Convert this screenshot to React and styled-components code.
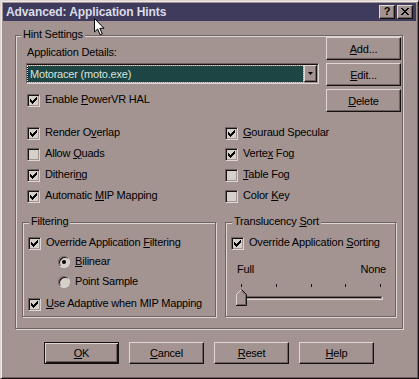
import React from 'react';
import styled, { createGlobalStyle, css } from 'styled-components';

const C = {
  bg: '#a39492',
  light: '#ddd6d3',
  hi: '#efe9e7',
  shadow: '#6f6361',
  dark: '#161010',
  title: '#3e3b5d',
  titleText: '#dcdce6',
  face: '#d5d0ca',
  teal: '#1d4543',
  tealText: '#d6e4df',
};

const Global = createGlobalStyle`
  html, body { margin: 0; padding: 0; background: ${C.bg}; }
  body { font-family: "Liberation Sans", Arial, sans-serif; font-size: 11px; color: #000; }
`;

const Window = styled.div`
  position: relative;
  box-sizing: border-box;
  width: 419px;
  height: 379px;
  background: ${C.bg};
  border: 1px solid;
  border-color: ${C.light} ${C.dark} ${C.dark} ${C.light};
  box-shadow: inset 1px 1px 0 ${C.hi}, inset -1px -1px 0 ${C.shadow};
  padding: 2px;
  display: flex;
  flex-direction: column;
  font-family: "Liberation Sans", Arial, sans-serif;
  font-size: 11px;
  letter-spacing: -0.2px;
  color: #000;
  overflow: hidden;
`;

const TitleBar = styled.div`
  flex: none;
  height: 18px;
  background: ${C.title};
  display: flex;
  align-items: center;
  justify-content: space-between;
  padding: 0 3px;
`;

const TitleText = styled.span`
  font-weight: bold;
  font-size: 12px;
  letter-spacing: -0.1px;
  line-height: 14px;
  color: ${C.titleText};
  white-space: nowrap;
`;

const CaptionButtons = styled.div`
  display: flex;
  gap: 2px;
`;

const raised = css`
  background: ${C.bg};
  border: 1px solid;
  border-color: ${C.light} ${C.dark} ${C.dark} ${C.light};
  box-shadow: inset -1px -1px 0 ${C.shadow};
`;

const sunken = css`
  border: 1px solid;
  border-color: ${C.shadow} ${C.light} ${C.light} ${C.shadow};
  box-shadow: inset 1px 1px 0 ${C.dark}, inset -1px -1px 0 ${C.bg};
`;

const CaptionButton = styled.div`
  box-sizing: border-box;
  width: 16px;
  height: 14px;
  ${raised}
  display: flex;
  align-items: center;
  justify-content: center;
  font-weight: bold;
  font-size: 11px;
  line-height: 11px;
  letter-spacing: 0;
  color: #000;
  padding-bottom: 1px;
`;

const Glyph = styled.svg`
  display: block;
  flex: none;
`;

const Body = styled.div`
  flex: 1;
  display: flex;
  flex-direction: column;
  padding: 14px 13px 0 12px;
`;

const Group = styled.div`
  position: relative;
  box-sizing: border-box;
  border: 1px solid ${C.shadow};
  box-shadow: inset 1px 1px 0 ${C.light}, 1px 1px 0 ${C.light};
`;

const Legend = styled.span`
  position: absolute;
  top: -8px;
  left: ${p => p.$left}px;
  padding: 0 2px;
  line-height: 13px;
  background: ${C.bg};
  white-space: nowrap;
`;

const MainGroup = styled(Group)`
  padding: 1px 1px 11px 6px;
  display: flex;
  flex-direction: column;
`;

const TopSection = styled.div`
  display: flex;
  gap: 7px;
  margin-left: 4px;
`;

const LeftCol = styled.div`
  flex: 1;
  display: flex;
  flex-direction: column;
`;

const FieldLabel = styled.div`
  margin: 9px 0 0 1px;
  line-height: 13px;
`;

const Combo = styled.div`
  box-sizing: border-box;
  margin-top: 4px;
  height: 21px;
  width: 293px;
  ${sunken}
  background: ${C.bg};
  padding: 1px;
  display: flex;
  gap: 1px;
`;

const ComboField = styled.div`
  flex: 1;
  height: 16px;
  margin-top: 1px;
  box-sizing: border-box;
  background: ${C.teal};
  outline: 1px dotted ${C.light};
  outline-offset: 0px;
  color: ${C.tealText};
  line-height: 16px;
  padding-left: 2px;
  white-space: nowrap;
`;

const DropButton = styled.div`
  box-sizing: border-box;
  width: 13px;
  ${raised}
  display: flex;
  align-items: center;
  justify-content: center;
`;

const SideButtons = styled.div`
  display: flex;
  flex-direction: column;
  gap: 3px;
`;

const Button = styled.button`
  box-sizing: border-box;
  width: 75px;
  height: ${p => p.$h || 23}px;
  margin: 0;
  padding: 0;
  font: inherit;
  letter-spacing: inherit;
  color: #000;
  background: ${C.bg};
  cursor: default;
  ${p => p.$default
    ? css`
        border: 1px solid ${C.dark};
        box-shadow: inset 1px 1px 0 ${C.light}, inset -1px -1px 0 ${C.dark}, inset -2px -2px 0 ${C.shadow};
      `
    : raised}
`;

const U = styled.u`
  text-decoration-thickness: 1px;
  text-underline-offset: 1px;
`;

const Row = styled.label`
  display: flex;
  align-items: flex-start;
  gap: 5px;
  height: 13px;
  margin: ${p => p.$m || '0'};
`;

const RowText = styled.span`
  line-height: 13px;
  margin-top: -1px;
  white-space: nowrap;
`;

const Box = styled.span`
  box-sizing: border-box;
  width: 13px;
  height: 13px;
  flex: none;
  ${sunken}
  background: ${C.face};
  display: flex;
  align-items: center;
  justify-content: center;
`;

const RadioCircle = styled.span`
  box-sizing: border-box;
  width: 12px;
  height: 12px;
  flex: none;
  border-radius: 50%;
  border: 1px solid;
  border-color: ${C.shadow} ${C.light} ${C.light} ${C.shadow};
  box-shadow: inset 1px 1px 0 ${C.dark};
  background: ${C.face};
  display: flex;
  align-items: center;
  justify-content: center;
  &::after {
    content: '';
    width: 4px;
    height: 4px;
    border-radius: 50%;
    background: ${p => (p.$on ? '#000' : 'transparent')};
  }
`;

const OptionsGrid = styled.div`
  margin: 15px 0 0 5px;
  display: grid;
  grid-template-columns: 198px 1fr;
  grid-auto-flow: column;
  grid-template-rows: repeat(4, 13px);
  row-gap: 8px;
`;

const BottomRow = styled.div`
  margin-top: 19px;
  display: flex;
  gap: 9px;
`;

const SubGroup = styled(Group)`
  width: ${p => p.$w}px;
  height: 95px;
  padding: 14px 0 0 5px;
  display: flex;
  flex-direction: column;
`;

const Scale = styled.div`
  margin: 13px 0 0 5px;
  width: 150px;
  display: flex;
  flex-direction: column;
`;

const ScaleLabels = styled.div`
  display: flex;
  justify-content: space-between;
  line-height: 13px;
  padding-left: 1px;
`;

const SliderArea = styled.div`
  position: relative;
  margin-top: 8px;
  height: 22px;
`;

const Ticks = styled.div`
  display: flex;
  justify-content: space-between;
  padding: 0 5px;
  height: 3px;
`;

const Tick = styled.span`
  width: 1px;
  height: 3px;
  background: ${C.dark};
`;

const Track = styled.div`
  box-sizing: border-box;
  margin: 9px 0 0 5px;
  width: 142px;
  height: 4px;
  border: 1px solid;
  border-color: ${C.shadow} ${C.light} ${C.light} ${C.shadow};
  background: ${C.dark};
  box-shadow: inset -1px -1px 0 ${C.bg};
`;

const Thumb = styled.svg`
  position: absolute;
  top: 5px;
  display: block;
`;

const ButtonRow = styled.div`
  margin-top: 13px;
  display: flex;
  justify-content: center;
  gap: 10px;
`;

const Cursor = styled.svg`
  position: absolute;
  left: 93px;
  top: 17px;
  display: block;
`;

const CheckGlyph = () => (
  <Glyph width="7" height="7" viewBox="0 0 7 7">
    <path d="M0 2h1v3H0zM1 3h1v3H1zM2 4h1v3H2zM3 3h1v3H3zM4 2h1v3H4zM5 1h1v3H5zM6 0h1v3H6z" fill="#000" />
  </Glyph>
);

const CloseGlyph = () => (
  <Glyph width="8" height="7" viewBox="0 0 8 7">
    <path d="M0 0h2v1H0zM6 0h2v1H6zM1 1h2v1H1zM5 1h2v1H5zM2 2h4v1H2zM3 3h2v1H3zM2 4h4v1H2zM1 5h2v1H1zM5 5h2v1H5zM0 6h2v1H0zM6 6h2v1H6z" fill="#000" />
  </Glyph>
);

function Check({ checked, children, m }) {
  return (
    <Row $m={m}>
      <Box>{checked && <CheckGlyph />}</Box>
      <RowText>{children}</RowText>
    </Row>
  );
}

function Radio({ on, children, m }) {
  return (
    <Row $m={m}>
      <RadioCircle $on={on} />
      <RowText>{children}</RowText>
    </Row>
  );
}

export default function App() {
  const sortValue = 0;
  return (
    <>
      <Global />
      <Window>
        <TitleBar>
          <TitleText>Advanced: Application Hints</TitleText>
          <CaptionButtons>
            <CaptionButton>?</CaptionButton>
            <CaptionButton><CloseGlyph /></CaptionButton>
          </CaptionButtons>
        </TitleBar>
        <Body>
          <MainGroup>
            <Legend $left={5}>Hint Settings</Legend>
            <TopSection>
              <LeftCol>
                <FieldLabel>Application Details:</FieldLabel>
                <Combo>
                  <ComboField>Motoracer (moto.exe)</ComboField>
                  <DropButton>
                    <Glyph width="5" height="3" viewBox="0 0 5 3">
                      <path d="M0 0h5L2.5 3z" fill="#000" />
                    </Glyph>
                  </DropButton>
                </Combo>
                <Check checked m="10px 0 0 1px">Enable <U>P</U>owerVR HAL</Check>
              </LeftCol>
              <SideButtons>
                <Button><U>A</U>dd...</Button>
                <Button><U>E</U>dit...</Button>
                <Button><U>D</U>elete</Button>
              </SideButtons>
            </TopSection>
            <OptionsGrid>
              <Check checked>Render O<U>v</U>erlap</Check>
              <Check>Allow <U>Q</U>uads</Check>
              <Check checked>Ditheri<U>n</U>g</Check>
              <Check checked>Automatic <U>M</U>IP Mapping</Check>
              <Check checked><U>G</U>ouraud Specular</Check>
              <Check checked>Verte<U>x</U> Fog</Check>
              <Check><U>T</U>able Fog</Check>
              <Check>Color <U>K</U>ey</Check>
            </OptionsGrid>
            <BottomRow>
              <SubGroup $w={194}>
                <Legend $left={6}>Filtering</Legend>
                <Check checked>Override Application <U>F</U>iltering</Check>
                <Radio on m="6px 0 0 30px"><U>B</U>ilinear</Radio>
                <Radio m="7px 0 0 30px">Point Sample</Radio>
                <Check checked m="9px 0 0 0"><U>U</U>se Adaptive when MIP Mapping</Check>
              </SubGroup>
              <SubGroup $w={171}>
                <Legend $left={6}>Translucency <U>S</U>ort</Legend>
                <Check checked>Override Application <U>S</U>orting</Check>
                <Scale>
                  <ScaleLabels>
                    <span>Full</span>
                    <span>None</span>
                  </ScaleLabels>
                  <SliderArea>
                    <Ticks>
                      {[0, 1, 2, 3, 4].map(i => <Tick key={i} />)}
                    </Ticks>
                    <Track />
                    <Thumb width="11" height="17" viewBox="0 0 11 17" style={{ left: `${sortValue * 34.75}px` }}>
                      <polygon points="5.5,0.5 10.5,5.5 10.5,16.5 0.5,16.5 0.5,5.5" fill={C.bg} />
                      <polyline points="0.5,16 0.5,5.5 5.5,0.5" fill="none" stroke={C.light} />
                      <polyline points="5.5,0.5 10.5,5.5 10.5,16.5 0,16.5" fill="none" stroke={C.dark} />
                      <polyline points="5.5,2 9.5,6 9.5,15.5 1,15.5" fill="none" stroke={C.shadow} />
                    </Thumb>
                  </SliderArea>
                </Scale>
              </SubGroup>
            </BottomRow>
          </MainGroup>
          <ButtonRow>
            <Button $h={22} $default><U>O</U>K</Button>
            <Button $h={22}><U>C</U>ancel</Button>
            <Button $h={22}><U>R</U>eset</Button>
            <Button $h={22}><U>H</U>elp</Button>
          </ButtonRow>
        </Body>
        <Cursor width="12" height="18" viewBox="0 0 12 18">
          <path d="M0.5 0.5 L0.5 14 L3.6 11 L6.2 16.8 L8.3 15.9 L5.8 10.3 L10 10.3 Z" fill="#fff" stroke="#000" strokeLinejoin="miter" />
        </Cursor>
      </Window>
    </>
  );
}
